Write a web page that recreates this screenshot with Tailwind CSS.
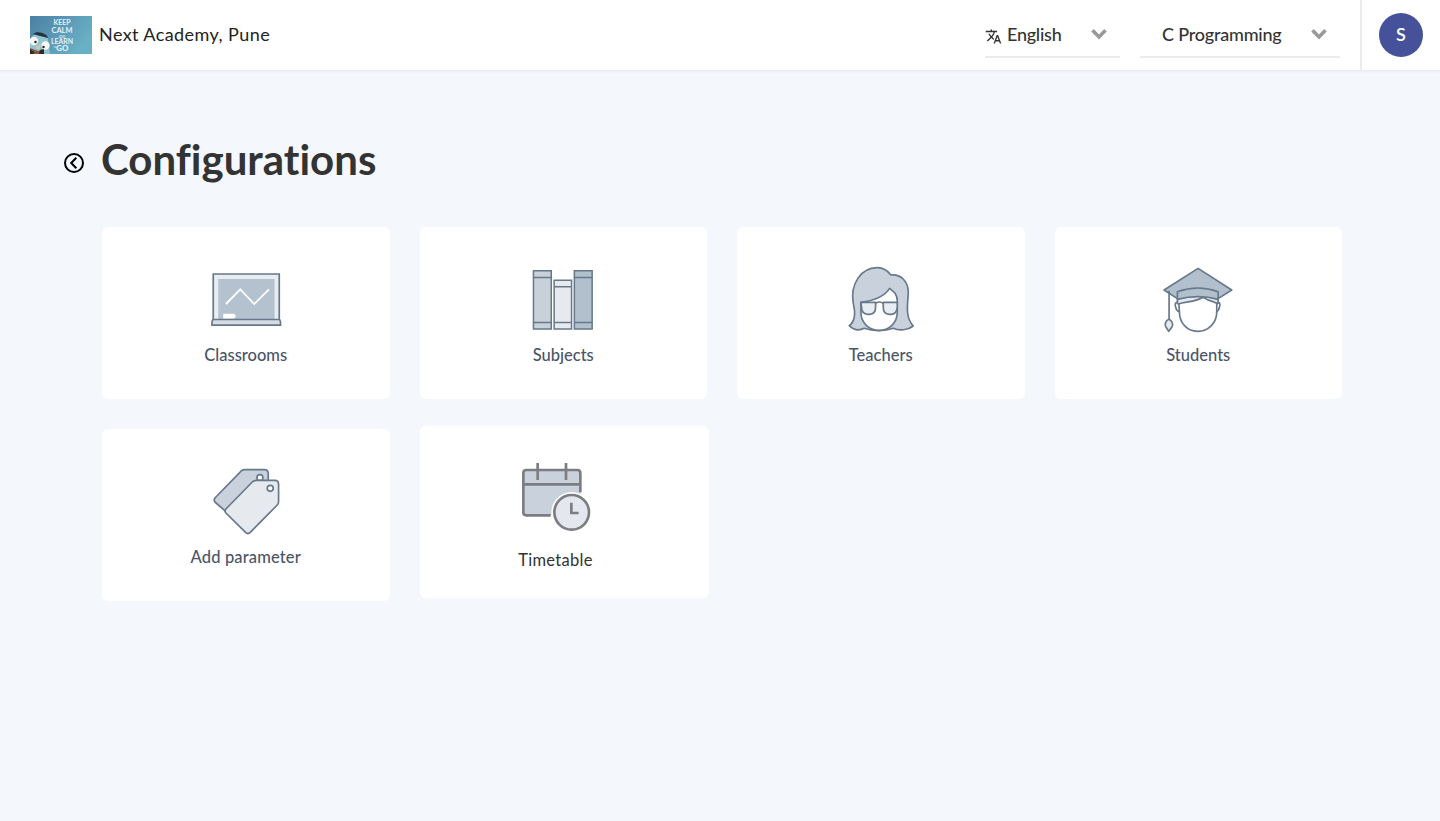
<!DOCTYPE html>
<html lang="en">
<head>
<meta charset="utf-8">
<title>Configurations</title>
<script src="https://cdn.jsdelivr.net/npm/@tailwindcss/browser@4"></script>
</head>
<body class="min-h-screen bg-[#f4f7fc] font-['Lato','Open_Sans',sans-serif] text-[#333] [font-variant-ligatures:none]">
<header class="flex h-[70px] items-center bg-white pl-[30px] shadow-[0_1px_3px_rgba(0,0,0,0.08)]">
  <svg class="h-[38px] w-[62px] shrink-0" viewBox="0 0 62 38" font-family="Lato, sans-serif" font-weight="700" fill="#e4f2f7" text-anchor="middle">
    <defs><linearGradient id="sky" x1="0" y1="0" x2="1" y2=".5"><stop stop-color="#4d7fa3"/><stop offset="1" stop-color="#69b0c6"/></linearGradient></defs>
    <rect width="62" height="38" fill="url(#sky)"/>
    <text x="32" y="9.3" font-size="6.5" textLength="17" lengthAdjust="spacingAndGlyphs">KEEP</text>
    <text x="32" y="17" font-size="7.5" textLength="21" lengthAdjust="spacingAndGlyphs">CALM</text>
    <text x="32" y="21.5" font-size="3" opacity=".8">AND</text>
    <path d="M1 22C6 15 16 17 18 23L20 38H0V23Z" fill="#91c5d3"/>
    <path d="M3 18C8 14 17 18 18 22L10 20Z" fill="#24323d"/>
    <path d="M0 32L8 35L14 33V38H0Z" fill="#805c48"/>
    <path d="M0 33L5 37L2 38H0ZM10 34L14 33V38H9Z" fill="#35281f"/>
    <circle cx="4" cy="25" r="4.2" fill="#f7f7f2"/><circle cx="15.5" cy="29.5" r="4.2" fill="#f7f7f2"/>
    <circle cx="5.5" cy="26" r="1.2" fill="#17222a"/><circle cx="13.5" cy="31" r="1.2" fill="#17222a"/>
    <path d="M6 30L10 29L10 33L7 33Z" fill="#d9c3a7"/>
    <text x="32" y="28.3" font-size="7" textLength="22" lengthAdjust="spacingAndGlyphs">LEARN</text>
    <text x="25" y="32" font-size="3" opacity=".8">to</text>
    <text x="32.3" y="35.2" font-size="7.5" font-weight="900" textLength="12" lengthAdjust="spacingAndGlyphs">GO</text>
  </svg>
  <div class="ml-[7px] text-[18px] leading-[68px] tracking-[0.42px] whitespace-nowrap text-[#222] -mt-[2px]">Next Academy, Pune</div>
  <div class="ml-auto mt-[2px] flex h-[44px] w-[135px] items-center border-b-2 border-[#ececec] pb-[2px]">
    <svg class="mt-[5px] h-[17px] w-[17px]" viewBox="0 0 24 24" fill="#333"><path d="M12.87 15.07l-2.54-2.51.03-.03A17.52 17.52 0 0 0 14.07 6H17V4h-7V2H8v2H1v2h11.17C11.5 7.92 10.44 9.75 9 11.35 8.07 10.32 7.3 9.19 6.69 8h-2c.73 1.63 1.73 3.17 2.98 4.56l-5.09 5.02L4 19l5-5 3.11 3.11.76-2.04zM18.5 10h-2L12 22h2l1.12-3h4.75L21 22h2l-4.5-12zm-2.62 7l1.62-4.33L19.12 17h-3.24z"/></svg>
    <span class="ml-[5px] w-[56px] text-[18px] leading-[36px] font-medium tracking-[-0.25px] whitespace-nowrap">English</span>
    <svg class="ml-[28px] h-[12px] w-[16px]" viewBox="0 0 16 12" fill="none" stroke="#999" stroke-width="3.6"><path d="M1.5 2.3L8 8.9L14.5 2.3"/></svg>
  </div>
  <div class="ml-[20px] mt-[2px] flex h-[44px] w-[200px] items-center border-b-2 border-[#ececec] pb-[2px] pl-[22px]">
    <span class="w-[121px] text-[18px] leading-[36px] font-medium tracking-[-0.2px] whitespace-nowrap">C Programming</span>
    <svg class="ml-[28px] h-[12px] w-[16px]" viewBox="0 0 16 12" fill="none" stroke="#999" stroke-width="3.6"><path d="M1.5 2.3L8 8.9L14.5 2.3"/></svg>
  </div>
  <div class="ml-[20px] flex h-[70px] w-[80px] items-center border-l-2 border-[#ececec] pl-[17px]">
    <div class="flex h-[44px] w-[44px] items-center justify-center rounded-full bg-[#45529a] pb-[2px] text-[18px] font-semibold text-white">S</div>
  </div>
</header>
<main class="pr-[98px] pl-[64px]">
  <div class="flex h-[157px] items-start pt-[59px]">
    <svg class="mt-[24px] h-[20px] w-[20px]" viewBox="0 0 20 20" fill="none" stroke="#000" stroke-width="2"><circle cx="10" cy="10" r="9"/><path d="M12.3 4.8L7.2 10L12.3 15.2"/></svg>
    <h1 class="ml-[17px] text-[42px] leading-[60px] font-bold">Configurations</h1>
  </div>
  <div class="ml-[38px] grid grid-cols-4 gap-[30px] text-[16.5px] font-medium text-[#4a5568]">
    <a class="flex h-[172px] flex-col items-center rounded-[6px] bg-white pt-[35px]">
      <svg class="h-[76px] w-[80px]" viewBox="205.75 262 80 76" fill="none" stroke="#66788a" stroke-width="1.7">
        <path d="M213 274H279V320H213Z" fill="#e9edf2"/><path d="M218 279H274.3V319H218Z" fill="#b4c1ce" stroke="none"/>
        <path d="M225.7 304L240 289.3L254 304L268.7 289.3" stroke="#fff" stroke-width="1.8"/>
        <path d="M223 313.7H234L235.7 316L234 318.7H223Z" fill="#fff" stroke="none"/>
        <path d="M213 319.5H279Q280.5 320 280.3 325.2H211.7Q211.5 320 213 319.5Z" fill="#d5dce4"/>
      </svg>
      <span class="leading-[34px]">Classrooms</span>
    </a>
    <a class="flex h-[172px] flex-col items-center rounded-[6px] bg-white pt-[35px]">
      <svg class="h-[76px] w-[80px]" viewBox="523.25 262 80 76" fill="none" stroke="#66788a" stroke-width="1.5">
        <path d="M533.7 270.7H551.5V329H533.7Z" fill="#c8d0da"/><path d="M533.7 277.4H551.5M533.7 322.4H551.5"/>
        <path d="M554.4 280.3H571.8V329H554.4Z" fill="#e6eaee"/><path d="M554.4 286.7H571.8M554.4 322.4H571.8"/>
        <path d="M574.6 270.7H592.4V329H574.6Z" fill="#b2bfcc"/><path d="M574.6 277.4H592.4M574.6 322.4H592.4"/>
      </svg>
      <span class="leading-[34px]">Subjects</span>
    </a>
    <a class="flex h-[172px] flex-col items-center rounded-[6px] bg-white pt-[35px]">
      <svg class="h-[76px] w-[80px]" viewBox="840.75 262 80 76" fill="none" stroke="#66788a">
        <g transform="translate(825 260) scale(.33333)" stroke-width="5" stroke-linejoin="round">
          <path d="M72 197C92 182 91 158 84 130C74 72 108 22 157 23C174 23 187 32 197 45C230 42 250 68 249 98C249 125 237 169 264 198C248 211 222 213 204 205C178 214 143 214 117 205C101 213 85 210 72 197Z" fill="#c9d2dc"/>
          <path d="M107 127C143 122 177 111 193 85C207 96 216 103 216 123V157C216 191 190 211 161 211C132 211 107 189 107 157Z" fill="#fff"/>
          <path d="M107 127H151V142Q151 163 133 163H128Q109 163 109 142ZM174 127H216V142Q214 163 197 163H192Q174 163 174 142Z" fill="#e9edf1"/><path d="M151 130Q163 122 174 130"/>
        </g>
      </svg>
      <span class="leading-[34px]">Teachers</span>
    </a>
    <a class="flex h-[172px] flex-col items-center rounded-[6px] bg-white pt-[35px]">
      <svg class="h-[76px] w-[80px]" viewBox="1158.25 262 80 76" fill="none" stroke="#66788a">
        <g transform="translate(1143 260) scale(.33333)" stroke-width="5" stroke-linejoin="round">
          <path d="M104 126Q94 128 99 142Q101 153 110 155M225 126Q235 128 230 142Q228 153 220 155" fill="#fff"/>
          <path d="M107 112H222V155C222 190 196 214 165 214C134 214 110 190 110 155Z" fill="#fff"/>
          <path d="M103 110H226V130C211 122 191 122 181 111C160 128 131 121 104 132Z" fill="#e4e9ef" stroke="none"/>
          <path d="M64 90L166 25L267 90L226 116Q166 102 104 116Z" fill="#b2bfcc"/>
          <path d="M104 95Q166 73 226 95V118Q166 101 104 118Z" fill="#b2bfcc"/>
          <path d="M79 92V178M104 133C130 123 157 128 181 111C191 122 211 122 226 132M104 118V132M226 118V132"/>
          <path d="M78 178C71 181 63 192 70 202L78 214L87 202C94 190 85 181 78 178Z" fill="#e6eaee"/>
        </g>
      </svg>
      <span class="leading-[34px]">Students</span>
    </a>
    <a class="flex h-[172px] flex-col items-center rounded-[6px] bg-white pt-[35px]">
      <svg class="h-[76px] w-[80px]" viewBox="205.75 464 80 76" fill="none" stroke="#66788a">
        <g transform="translate(180 460) scale(.33333)" stroke-width="5" stroke-linejoin="round">
          <path d="M184 32Q188 29 193 29H252Q264 29 264 41V90L136 154L104 126Q100 121 104 114Z" fill="#c9d2dc"/><circle cx="239" cy="53" r="9" fill="#fff"/>
          <path d="M216 66Q221 61 228 61H284Q295 61 295 73V125Q295 131 291 135L210 217Q203 224 196 217L137 159Q132 153 137 147Z" fill="#e6eaee"/><circle cx="270" cy="85" r="9" fill="#fff"/>
        </g>
      </svg>
      <span class="leading-[34px] tracking-[0.15px]">Add parameter</span>
    </a>
    <a class="-mt-[3px] flex h-[172px] w-[289px] flex-col items-center rounded-[6px] bg-white pt-[32px] pr-[17px] text-[#333]">
      <svg class="h-[76px] w-[80px]" viewBox="516 458 80 76" fill="none" stroke="#7b7d81">
        <g transform="translate(500 455) scale(.33333)" stroke-width="8">
          <path d="M78 44H232Q242 44 242 54V181H78Q70 181 70 171V54Q70 44 78 44Z" fill="#c9d2dc" stroke="none"/>
          <path d="M241 112V54Q241 45 232 45H79Q70 45 70 54V172Q70 181 79 181H152M70 88H241M113 24V75M198 24V75"/>
          <circle cx="215" cy="172" r="61" fill="#fff" stroke="none"/><circle cx="215" cy="172" r="52" fill="#e4e8ee"/><path d="M214 143V174H236"/>
        </g>
      </svg>
      <span class="mt-[8px] leading-[36px] font-normal tracking-[0.3px]">Timetable</span>
    </a>
  </div>
</main>
</body>
</html>
